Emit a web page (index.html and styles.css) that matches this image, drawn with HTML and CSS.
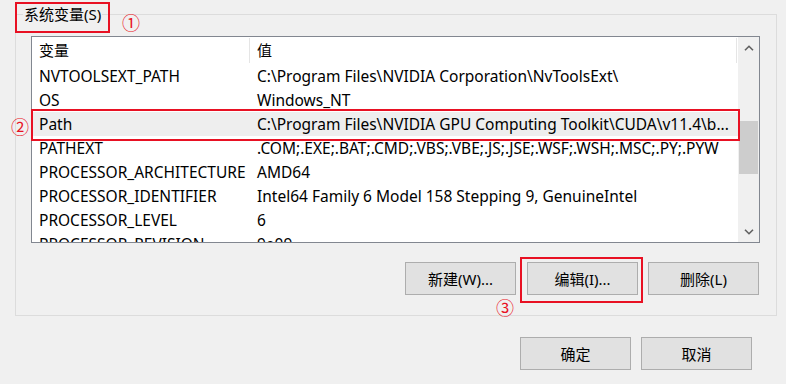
FILE: index.html
```html
<!DOCTYPE html>
<html lang="zh-CN">
<head>
<meta charset="utf-8">
<title>系统变量</title>
<link rel="stylesheet" href="styles.css">
</head>
<body>
<div class="dialog">
  <fieldset class="group">
    <legend class="group-title">系统变量(S)</legend>
    <div class="group-body">
      <div class="list">
        <div class="list-main">
          <div class="list-head">
            <div class="head-cell head-name">变量</div>
            <span class="head-sep"></span>
            <div class="head-cell head-value">值</div>
            <span class="head-sep"></span>
          </div>
          <div class="list-body">
            <div class="row"><span class="cell">NVTOOLSEXT_PATH</span><span class="cell">C:\Program Files\NVIDIA Corporation\NvToolsExt\</span></div>
            <div class="row"><span class="cell">OS</span><span class="cell">Windows_NT</span></div>
            <div class="row row-selected"><span class="cell">Path</span><span class="cell">C:\Program Files\NVIDIA GPU Computing Toolkit\CUDA\v11.4\b...</span></div>
            <div class="row"><span class="cell">PATHEXT</span><span class="cell">.COM;.EXE;.BAT;.CMD;.VBS;.VBE;.JS;.JSE;.WSF;.WSH;.MSC;.PY;.PYW</span></div>
            <div class="row"><span class="cell">PROCESSOR_ARCHITECTURE</span><span class="cell">AMD64</span></div>
            <div class="row"><span class="cell">PROCESSOR_IDENTIFIER</span><span class="cell">Intel64 Family 6 Model 158 Stepping 9, GenuineIntel</span></div>
            <div class="row"><span class="cell">PROCESSOR_LEVEL</span><span class="cell">6</span></div>
            <div class="row"><span class="cell">PROCESSOR_REVISION</span><span class="cell">9e09</span></div>
          </div>
        </div>
        <div class="scrollbar">
          <div class="sb-btn">
            <svg width="10" height="6" viewBox="0 0 10 6"><polyline points="1,5.3 5,1.3 9,5.3" fill="none" stroke="#606060" stroke-width="1.6"/></svg>
          </div>
          <div class="sb-track"><div class="sb-thumb"></div></div>
          <div class="sb-btn">
            <svg width="10" height="6" viewBox="0 0 10 6"><polyline points="1,0.7 5,4.7 9,0.7" fill="none" stroke="#606060" stroke-width="1.6"/></svg>
          </div>
        </div>
        <div class="mark mark-row"></div>
        <span class="num num-2">②</span>
      </div>
      <div class="actions">
        <button class="btn">新建(W)...</button>
        <div class="btn-wrap">
          <button class="btn">编辑(I)...</button>
          <div class="mark mark-btn"></div>
          <span class="num num-3">③</span>
        </div>
        <button class="btn">删除(L)</button>
      </div>
    </div>
  </fieldset>
  <div class="footer">
    <button class="btn">确定</button>
    <button class="btn">取消</button>
  </div>
  <div class="mark mark-title"></div>
  <span class="num num-1">①</span>
</div>
</body>
</html>
```
FILE: styles.css
```css
* { box-sizing: border-box; }
html, body { margin: 0; padding: 0; }
body {
  background: #f0f0f0;
  font-family: "Noto Sans", "Noto Sans CJK SC", sans-serif;
  font-size: 15px;
  color: #000;
}
.dialog {
  position: relative;
  width: 786px;
  height: 384px;
  padding: 4px 0 0 15px;
  overflow: hidden;
}
.group {
  margin: 0;
  padding: 0;
  width: 762px;
  border: 1px solid #dcdcdc;
  min-width: 0;
}
.group-title {
  margin-left: 7px;
  padding: 0 1px;
  line-height: 20px;
  height: 20px;
}
.group-body {
  padding: 12px 16px 20px 15px;
}
.list {
  position: relative;
  width: 729px;
  height: 207px;
  border: 1px solid #828790;
  background: #fff;
  display: flex;
}
.list-main {
  flex: 1;
  min-width: 0;
  display: flex;
  flex-direction: column;
  overflow: hidden;
}
.list-head {
  display: flex;
  height: 27px;
  flex: none;
}
.head-cell {
  line-height: 27px;
  padding-left: 7px;
  white-space: nowrap;
}
.head-name { width: 217px; }
.head-value { width: 486px; padding-left: 7px; }
.head-sep {
  width: 1px;
  height: 25px;
  margin-top: 1px;
  background: #e5e5e5;
}
.list-body {
  flex: 1;
  overflow: hidden;
}
.row {
  display: grid;
  grid-template-columns: 218px 1fr;
  height: 24px;
  line-height: 24px;
}
.row-selected { background: #eeeeee; }
.cell {
  padding-left: 7px;
  font-size: 15.5px;
  white-space: nowrap;
  overflow: hidden;
}
.scrollbar {
  width: 21px;
  flex: none;
  background: #f0f0f0;
  display: flex;
  flex-direction: column;
}
.sb-btn {
  height: 21px;
  display: flex;
  align-items: center;
  justify-content: center;
  flex: none;
}
.sb-btn svg { display: block; }
.sb-track { flex: 1; }
.sb-thumb {
  margin: 63px 0 0 1px;
  width: 19px;
  height: 53px;
  background: #cdcdcd;
}
.actions {
  display: flex;
  justify-content: flex-end;
  gap: 10px;
  margin: 19px 1px 0 0;
}
.btn-wrap {
  position: relative;
  margin-left: 1px;
}
.btn {
  display: block;
  width: 111px;
  height: 33px;
  padding: 0;
  margin: 0;
  background: #e1e1e1;
  border: 1px solid #adadad;
  font-family: inherit;
  font-size: 15px;
  color: #000;
}
.footer {
  display: flex;
  justify-content: flex-end;
  gap: 10px;
  margin-top: 21px;
  padding-right: 34px;
  margin-left: -15px;
}
.mark {
  position: absolute;
  border: 2px solid #e81123;
  pointer-events: none;
}
.mark-title { left: 15px; top: 2px; width: 95px; height: 31px; }
.mark-row { left: -1px; top: 72px; width: 709px; height: 32px; }
.mark-btn { left: -7px; top: -5px; width: 123px; height: 46px; }
.num {
  position: absolute;
  color: #e81123;
  font-family: "Noto Sans CJK SC", sans-serif;
  font-size: 18px;
  line-height: 18px;
}
.num-1 { left: 122px; top: 13px; }
.num-2 { left: -21px; top: 80px; }
.num-3 { left: -31px; top: 36px; }
```
